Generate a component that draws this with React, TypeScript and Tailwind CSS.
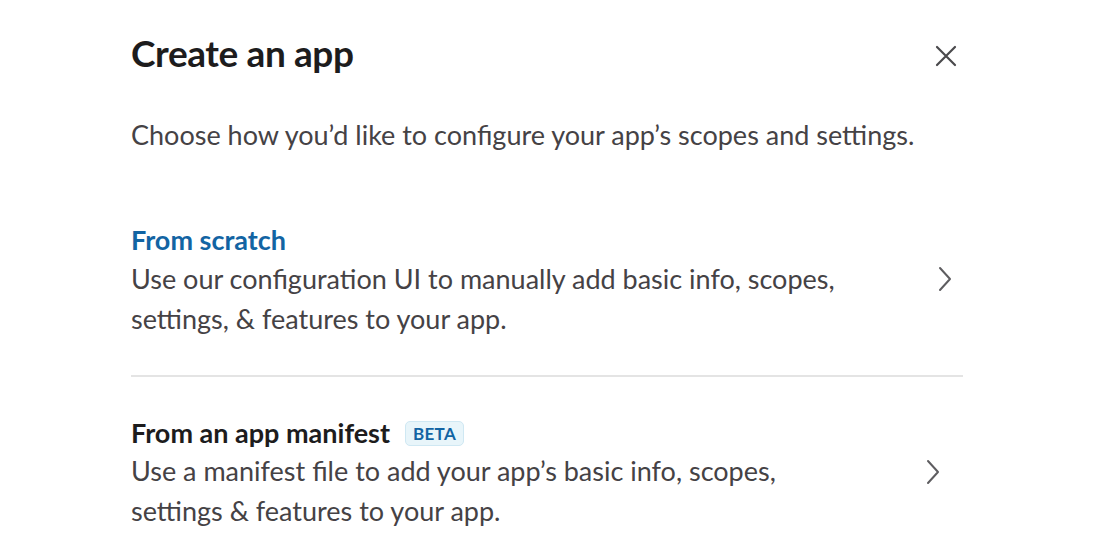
import React from "react";

function Chevron({ className }: { className?: string }) {
  return (
    <svg className={className} width="16" height="26" viewBox="0 0 16 26" fill="none">
      <path d="M3 2 L13 13 L3 24" stroke="#5e5d60" strokeWidth="2" strokeLinecap="round" strokeLinejoin="round" />
    </svg>
  );
}

export default function App() {
  return (
    <div className="w-[1100px] h-[556px] bg-white overflow-hidden" style={{ fontFamily: "Lato, 'Noto Sans', sans-serif" }}>
      <div className="ml-[131px] w-[832px] pt-[26px]">
        <div className="flex items-center justify-between">
          <h1 className="text-[37px] leading-[54px] font-bold text-[#1d1c1d] tracking-[-0.4px]">Create an app</h1>
          <button className="w-[30px] h-[30px] mr-[2px] mt-[6px] flex items-center justify-center">
            <svg width="22" height="22" viewBox="0 0 22 22" fill="none">
              <path d="M2 2 L20 20 M20 2 L2 20" stroke="#4a494c" strokeWidth="2.2" strokeLinecap="round" />
            </svg>
          </button>
        </div>
        <p className="mt-[37px] text-[27px] leading-[36px] text-[#454245]">
          Choose how you’d like to configure your app’s scopes and settings.
        </p>
        <div className="mt-[70px] flex items-center justify-between pb-[36px] border-b-2 border-[#e4e4e4]">
          <div>
            <div className="text-[27px] leading-[34px] font-bold text-[#1264a3]">From scratch</div>
            <div className="text-[27px] leading-[40px] text-[#454245] mt-[2px]">
              Use our configuration UI to manually add basic info, scopes,
              <br />
              settings, &amp; features to your app.
            </div>
          </div>
          <Chevron className="mr-[10px] mb-[4px]" />
        </div>
        <div className="mt-[39px] flex items-center justify-between">
          <div>
            <div className="flex items-center gap-[15px]">
              <span className="text-[27px] leading-[34px] font-bold text-[#1d1c1d]">From an app manifest</span>
              <span className="text-[17px] leading-[22px] font-bold text-[#1264a3] bg-[#e8f5fa] border border-[#cfe8f3] rounded-[5px] px-[7px] pt-[1px] tracking-[0.3px]">BETA</span>
            </div>
            <div className="text-[27px] leading-[40px] text-[#454245] mt-[1px]">
              Use a manifest file to add your app’s basic info, scopes,
              <br />
              settings &amp; features to your app.
            </div>
          </div>
          <Chevron className="mr-[22px] mb-[4px]" />
        </div>
      </div>
    </div>
  );
}
